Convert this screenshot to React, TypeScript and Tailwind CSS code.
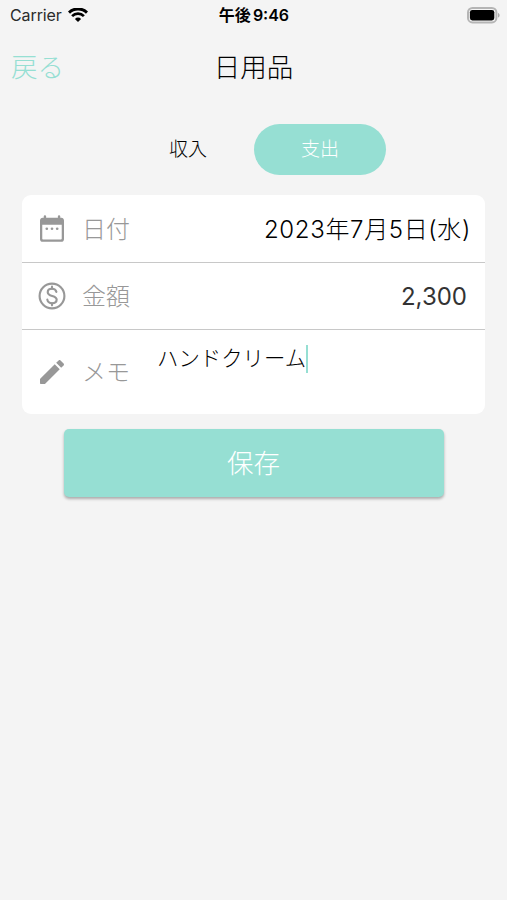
import type { ReactNode } from 'react'

const WifiIcon = () => (
  <svg viewBox="0 0 20 15" className="h-[15px] w-5" fill="none" stroke="#000">
    <path d="M1 4.6a12.9 12.9 0 0 1 18 0" strokeWidth="3" />
    <path d="M4.1 8.1a8.3 8.3 0 0 1 11.8 0" strokeWidth="2.7" />
    <path d="M10 14 6.9 10.9a4.4 4.4 0 0 1 6.2 0z" fill="#000" stroke="none" />
  </svg>
)

const BatteryIcon = () => (
  <svg viewBox="0 0 33 17" className="h-[17px] w-[33px]">
    <rect x="1" y="1" width="28.4" height="14.4" rx="4.5" fill="none" stroke="#b5b5b5" strokeWidth="2" />
    <rect x="2.9" y="2.9" width="24.4" height="10.6" rx="2.4" fill="#000" />
    <path d="M31 6v4.6c1-.4 1.6-1.2 1.6-2.3S32 6.4 31 6z" fill="#adadad" />
  </svg>
)

const CalendarIcon = () => (
  <svg viewBox="0 0 24 24" className="size-8" fill="currentColor">
    <path
      fillRule="evenodd"
      d="M19 3.6h-.8V2.5a.9.900 0 0 0-1.800 0v1.100H7.600V2.500a.9.900 0 0 0-1.800 0v1.100H5c-1.100 0-2 .9-2 2V19.600c0 1.100.9 2 2 2h14c1.100 0 2-.9 2-2V5.600c0-1.100-.9-2-2-2zM4.700 8.800h14.600v10.300c0 .5-.4.800-.8.800h-13c-.5 0-.8-.3-.8-.8z"
    />
    <circle cx="8.1" cy="11.8" r="1" />
    <circle cx="12" cy="11.8" r="1" />
    <circle cx="15.900" cy="11.8" r="1" />
  </svg>
)

const DollarIcon = () => (
  <svg viewBox="0 0 24 24" className="size-8" fill="none" stroke="currentColor" strokeWidth="1.6" strokeLinecap="round">
    <circle cx="12" cy="12" r="9.3" />
    <path d="M15.300 8.900c-.4-1.600-1.700-2.300-3.300-2.300-1.900 0-3.200 1-3.200 2.500 0 3.700 6.700 2 6.700 5.600 0 1.700-1.400 2.700-3.400 2.700-1.900 0-3.300-.9-3.600-2.700" />
    <path d="M12 5v1.600M12 17.400V19" />
  </svg>
)

const PencilIcon = () => (
  <svg viewBox="0 0 24 24" className="size-8" fill="currentColor">
    <path d="M3 17.46v3.04c0 .28.22.5.5.5h3.04c.13 0 .26-.05.35-.15L17.81 9.94l-3.75-3.75L3.15 17.1c-.1.1-.15.22-.15.36zM20.71 7.04c.39-.39.39-1.02 0-1.41l-2.34-2.34c-.39-.39-1.02-.39-1.41 0l-1.83 1.83 3.75 3.75 1.83-1.83z" />
  </svg>
)

type RowLabelProps = {
  icon: ReactNode
  text: string
}

const RowLabel = ({ icon, text }: RowLabelProps) => (
  <div className="flex items-center gap-[14px] text-[#989898]">
    {icon}
    <span className="pt-0.5 text-2xl font-light">{text}</span>
  </div>
)

const StatusBar = () => (
  <div className="grid h-[30px] grid-cols-3 items-center pr-[7px] pl-[10px] text-black">
    <div className="flex items-center gap-[6px]">
      <span className="text-base tracking-[-0.1px] text-[#2b2b2b]">Carrier</span>
      <WifiIcon />
    </div>
    <p className="pr-0.5 text-center text-base font-semibold whitespace-nowrap">
      午後<span className="ml-0.5">9:46</span>
    </p>
    <div className="flex justify-end">
      <BatteryIcon />
    </div>
  </div>
)

export default function App() {
  return (
    <div className="h-[900px] w-[507px] bg-[#f4f4f4] font-['Inter','Noto_Sans_CJK_JP',sans-serif]">
      <StatusBar />
      <header className="grid h-[74px] grid-cols-3 items-center px-[11px] pt-0.5">
        <button className="text-left text-[26.5px] font-light text-[#96dfd3]">戻る</button>
        <h1 className="text-center text-[26.5px] font-light text-black">日用品</h1>
      </header>

      <div className="mt-5 flex h-[51px] pl-[122px]">
        <button className="w-[132px] rounded-full pt-0.5 text-[19px] font-light text-black">収入</button>
        <button className="w-[132px] rounded-full bg-[#96dfd3] pt-0.5 text-[19px] font-light text-white">支出</button>
      </div>

      <section className="mx-[22px] mt-5 h-[219px] rounded-[9px] bg-white">
        <div className="flex h-[68px] items-center justify-between border-b border-[#c8c8c8] pr-[14px] pl-[14px]">
          <RowLabel icon={<CalendarIcon />} text="日付" />
          <p className="pt-0.5 text-2xl font-light tracking-[0.65px] text-black">2023年7月5日(水)</p>
        </div>
        <div className="flex h-[67px] items-center justify-between border-b border-[#c8c8c8] pr-[18px] pl-[14px]">
          <RowLabel icon={<DollarIcon />} text="金額" />
          <p className="pt-0.5 text-2xl text-[#333]">2,300</p>
        </div>
        <div className="flex h-[84px] pl-[14px]">
          <RowLabel icon={<PencilIcon />} text="メモ" />
          <div className="mt-[15px] ml-[27px] flex h-7 items-center">
            <span className="pb-0.5 text-[21.4px] font-light text-black">ハンドクリーム</span>
            <span className="h-7 w-0.5 bg-[#96dfd3]" />
          </div>
        </div>
      </section>

      <button className="mx-auto mt-[15px] block h-[68px] w-[380px] rounded-[5px] bg-[#96dfd3] pt-0.5 text-[26.5px] font-light text-white shadow-[0_2px_3px_rgba(0,0,0,0.3)]">
        保存
      </button>
    </div>
  )
}
